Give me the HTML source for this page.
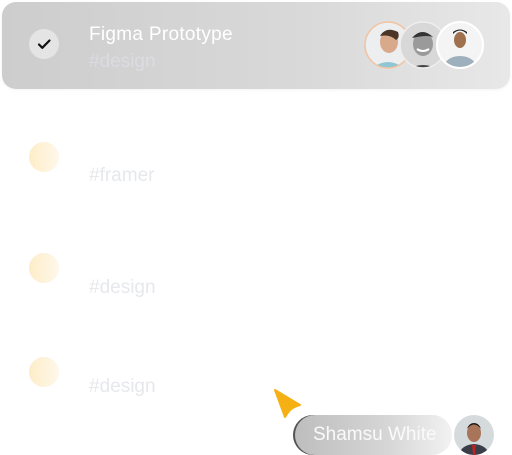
<!DOCTYPE html>
<html><head><style>
html,body{margin:0;padding:0;width:512px;height:455px;background:#fff;overflow:hidden;font-family:"Liberation Sans",sans-serif;position:relative}
.card{position:absolute;left:2px;top:2px;width:508px;height:87px;border-radius:14px;background:linear-gradient(90deg,#cdcdcd,#d9d9d9 60%,#e8e8e8);box-shadow:0 1px 3px rgba(0,0,0,.05)}
.chk{position:absolute;left:29px;top:29px;width:30px;height:30px;border-radius:50%;background:#e4e4e4}
.t{position:absolute;color:#fff;font-size:19px;white-space:nowrap}
.tag{position:absolute;color:#e6e8ec;font-size:19px;left:89px}
.dot{position:absolute;left:29px;width:30px;height:30px;border-radius:50%;background:linear-gradient(90deg,#fdedc8,#fff8ea);}
.pill{position:absolute;left:293px;top:415px;width:159px;height:40px;border-radius:20px;background:linear-gradient(90deg,#bdbdbd,#d6d6d6 60%,#f2f2f2);box-shadow:inset 2px 0 0 #555}
</style></head><body>
<div class="card"></div>
<div class="chk"><svg width="30" height="30"><path d="M10 15.5l3.3 3.3L20.5 11.5" fill="none" stroke="#111" stroke-width="2.2" stroke-linecap="round" stroke-linejoin="round"/></svg></div>
<div class="t" style="left:89px;top:24px;font-weight:500;letter-spacing:0.3px">Figma Prototype</div>
<div class="t" style="left:89px;top:51px;color:#dfe0e8;opacity:.7">#design</div>
<svg style="position:absolute;left:362px;top:18px" width="128" height="56">
<defs><clipPath id="c1"><circle cx="26" cy="27" r="23"/></clipPath><clipPath id="c2"><circle cx="61" cy="27" r="23"/></clipPath><clipPath id="c3"><circle cx="98" cy="27" r="23"/></clipPath></defs>
<g clip-path="url(#c1)"><rect width="128" height="56" fill="#eceef0"/><path d="M8 52q18-16 36 0v6H8z" fill="#8fc6d4"/><ellipse cx="27" cy="24" rx="9" ry="11" fill="#d9a98c"/><path d="M18 18q6-10 18-4q2 6-2 8q-6-6-16-4z" fill="#4a3527"/></g>
<circle cx="26" cy="27" r="23" fill="none" stroke="#f2c3a0" stroke-width="1.5"/>
<g clip-path="url(#c2)"><rect width="128" height="56" fill="#d8d8d8"/><path d="M42 54q19-14 38 0v4H42z" fill="#444"/><ellipse cx="61" cy="26" rx="10" ry="12" fill="#9a9a9a"/><path d="M50 20q10-12 22 0q-4-4-22 0z" fill="#333"/><path d="M55 31q6 4 12 0" stroke="#fff" stroke-width="2" fill="none"/></g>
<circle cx="61" cy="27" r="23" fill="none" stroke="#eee" stroke-width="1.5"/>
<g clip-path="url(#c3)"><rect width="128" height="56" fill="#f4f4f4"/><path d="M78 56q4-18 20-18t20 18z" fill="#9fb0bd"/><ellipse cx="98" cy="22" rx="6" ry="8" fill="#a0714f"/><path d="M91 16q7-7 14 0v-2q-7-5-14 0z" fill="#222"/></g>
<circle cx="98" cy="27" r="23" fill="none" stroke="#fff" stroke-width="2"/>
</svg>
<div class="dot" style="top:142px"></div>
<div class="tag" style="top:165px">#framer</div>
<div class="dot" style="top:253px"></div>
<div class="tag" style="top:277px">#design</div>
<div class="dot" style="top:357px"></div>
<div class="tag" style="top:376px">#design</div>
<svg style="position:absolute;left:272px;top:387px" width="32" height="32"><path d="M3 3L28 18Q19 20 15 27L13 30Z" fill="#f5b014" stroke="#f5b014" stroke-width="2" stroke-linejoin="round"/></svg>
<div class="pill"></div>
<div class="t" style="left:313px;top:424px;color:#fafafa">Shamsu White</div>
<svg style="position:absolute;left:454px;top:415px" width="40" height="40"><defs><clipPath id="c4"><circle cx="20" cy="20" r="20"/></clipPath></defs><g clip-path="url(#c4)"><rect width="40" height="40" fill="#d5dadd"/><path d="M4 42q2-12 16-13q14 1 16 13z" fill="#3a3e48"/><path d="M18 30h4l-1 10h-2z" fill="#b22"/><ellipse cx="20" cy="18" rx="7" ry="9" fill="#a8755a"/><path d="M13 14q7-9 14 0q-2-6-7-6q-5 0-7 6z" fill="#1d1510"/></g></svg>
</body></html>
